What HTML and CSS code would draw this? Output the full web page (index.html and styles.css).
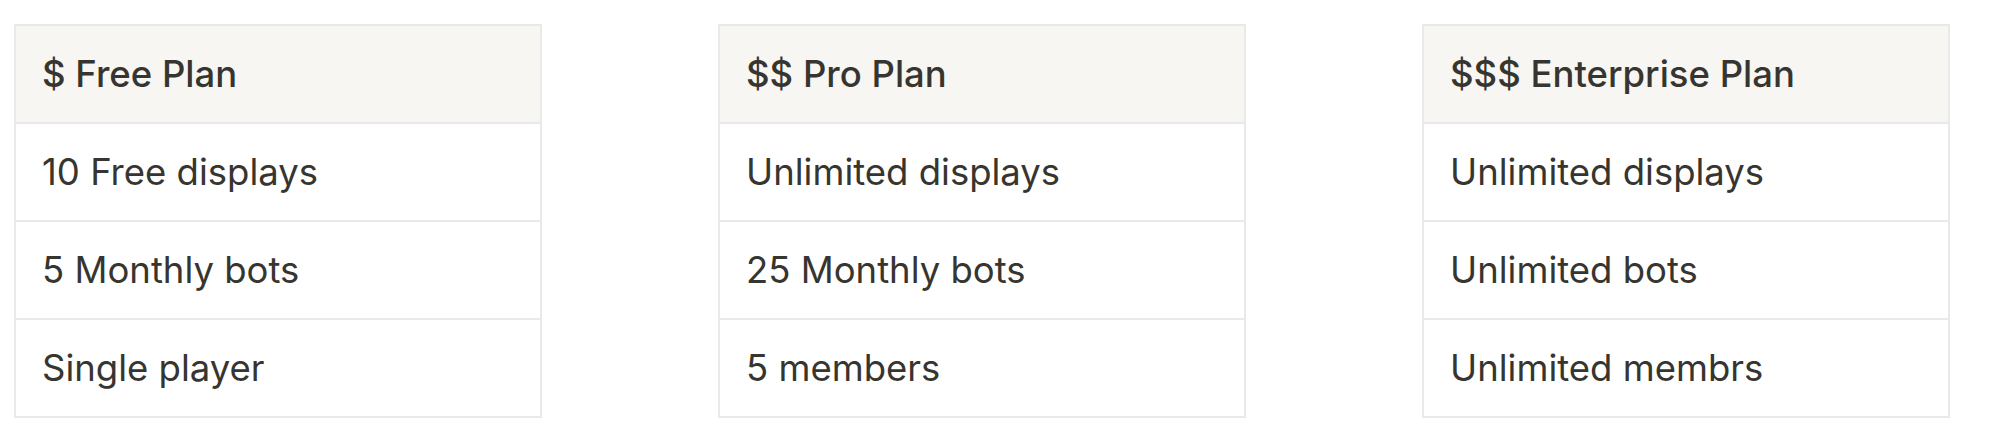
FILE: index.html
```html
<!DOCTYPE html>
<html>
<head>
<meta charset="utf-8">
<link rel="stylesheet" href="styles.css">
</head>
<body>
<div class="plans">
  <table class="plan">
    <thead><tr><th>$ Free Plan</th></tr></thead>
    <tbody>
      <tr><td>10 Free displays</td></tr>
      <tr><td>5 Monthly bots</td></tr>
      <tr><td>Single player</td></tr>
    </tbody>
  </table>
  <table class="plan">
    <thead><tr><th>$$ Pro Plan</th></tr></thead>
    <tbody>
      <tr><td>Unlimited displays</td></tr>
      <tr><td>25 Monthly bots</td></tr>
      <tr><td>5 members</td></tr>
    </tbody>
  </table>
  <table class="plan">
    <thead><tr><th>$$$ Enterprise Plan</th></tr></thead>
    <tbody>
      <tr><td>Unlimited displays</td></tr>
      <tr><td>Unlimited bots</td></tr>
      <tr><td>Unlimited membrs</td></tr>
    </tbody>
  </table>
</div>
</body>
</html>
```
FILE: styles.css
```css
html, body {
  margin: 0;
  padding: 0;
  background: #ffffff;
}
body {
  font-family: "Inter", "Noto Sans", sans-serif;
  color: #37352f;
}
.plans {
  display: flex;
  gap: 176px;
  padding: 24px 0 0 14px;
}
.plan {
  width: 528px;
  border-collapse: collapse;
  border: 2px solid #e9e9e7;
}
.plan th,
.plan td {
  height: 98px;
  box-sizing: border-box;
  padding: 0 26px;
  text-align: left;
  font-size: 36.5px;
  border-top: 2px solid #e9e9e7;
  vertical-align: middle;
}
.plan th {
  font-weight: 500;
  background: #f7f6f3;
}
.plan td {
  font-weight: 400;
}
```
